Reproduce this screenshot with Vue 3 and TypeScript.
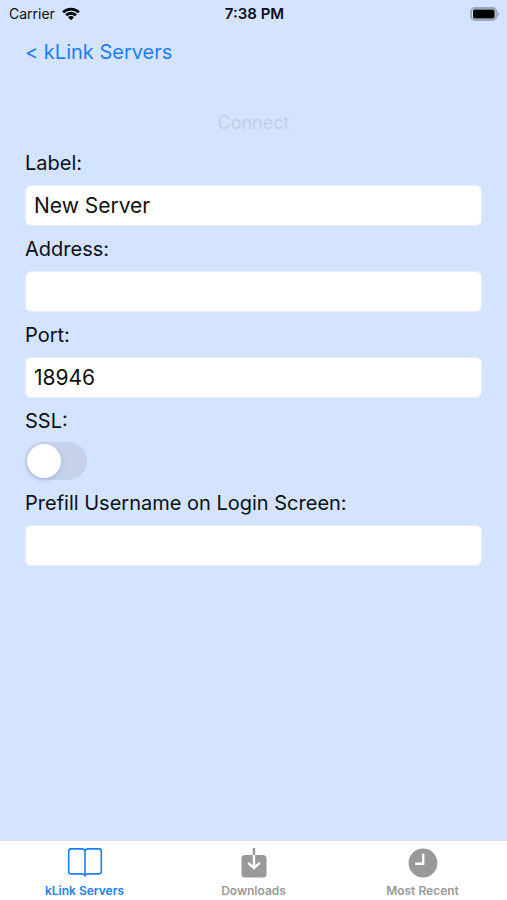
<script setup lang="ts">
import { reactive, ref, computed } from 'vue'

interface ServerForm {
  label: string
  address: string
  port: string
  ssl: boolean
  username: string
}

type TabId = 'servers' | 'downloads' | 'recent'

const form = reactive<ServerForm>({
  label: 'New Server',
  address: '',
  port: '18946',
  ssl: false,
  username: '',
})

const activeTab = ref<TabId>('servers')
const canConnect = computed<boolean>(() => form.address.trim() !== '' && form.port !== '')
</script>

<template>
  <div class="screen">
    <header class="status">
      <div class="carrier">
        <span>Carrier</span>
        <svg class="wifi" viewBox="0 0 18 14" aria-hidden="true">
          <path d="M0.2 4.4 A12.4 12.4 0 0 1 17.8 4.4 L15.9 6.3 A9.8 9.8 0 0 0 2.1 6.3Z" />
          <path d="M3.1 7.3 A8.2 8.2 0 0 1 14.9 7.3 L12.9 9.3 A5.6 5.6 0 0 0 5.1 9.3Z" />
          <path d="M6 10.3 A4.2 4.2 0 0 1 12 10.3 L9 13.3Z" />
        </svg>
      </div>
      <time class="clock">7:38 PM</time>
      <svg class="battery" viewBox="0 0 30 14" aria-hidden="true">
        <rect x="1" y="1" width="25.4" height="12" rx="4" class="shell" />
        <rect x="3" y="2.6" width="21.6" height="8.8" rx="1.6" />
        <path d="M27.6 4.4 Q30.8 7 27.6 9.6Z" class="cap" />
      </svg>
    </header>

    <nav class="top">
      <a class="back" href="#servers">&lt; kLink Servers</a>
    </nav>

    <form class="form" @submit.prevent>
      <button class="connect" type="submit" :disabled="!canConnect">Connect</button>

      <label for="label">Label:</label>
      <input id="label" v-model="form.label" class="field" type="text" />

      <label for="address">Address:</label>
      <input id="address" v-model="form.address" class="field" type="text" />

      <label for="port">Port:</label>
      <input id="port" v-model="form.port" class="field" type="text" inputmode="numeric" />

      <label for="ssl">SSL:</label>
      <input id="ssl" v-model="form.ssl" class="switch" type="checkbox" role="switch" />

      <label for="username">Prefill Username on Login Screen:</label>
      <input id="username" v-model="form.username" class="field" type="text" />
    </form>

    <nav class="tabs">
      <button class="tab" :class="{ active: activeTab === 'servers' }" type="button" @click="activeTab = 'servers'">
        <svg viewBox="0 0 36 32" aria-hidden="true">
          <path
            class="line"
            d="M18 4 Q17.4 1.9 15 1.9 H4 Q1.7 1.9 1.7 4.2 V24.6 Q1.7 26.9 4 26.9 H14.6 Q17 26.9 18 28.4 Q19 26.9 21.4 26.9 H32 Q34.3 26.9 34.3 24.6 V4.2 Q34.3 1.9 32 1.9 H21 Q18.6 1.9 18 4 V29"
          />
        </svg>
        <span>kLink Servers</span>
      </button>
      <button class="tab" :class="{ active: activeTab === 'downloads' }" type="button" @click="activeTab = 'downloads'">
        <svg viewBox="0 0 36 32" aria-hidden="true">
          <rect x="5.5" y="8" width="25" height="22.6" rx="3.6" class="fill" />
          <path d="M18 1 V8" class="stem" />
          <path d="M18 8 V20.8 M12.2 15.8 L18 21.2 L23.8 15.8" class="cut" />
        </svg>
        <span>Downloads</span>
      </button>
      <button class="tab" :class="{ active: activeTab === 'recent' }" type="button" @click="activeTab = 'recent'">
        <svg viewBox="0 0 36 32" aria-hidden="true">
          <circle cx="18" cy="16" r="14.4" class="fill" />
          <path d="M18.2 6.4 V16.8 H10.2" class="cut" />
        </svg>
        <span>Most Recent</span>
      </button>
    </nav>
  </div>
</template>

<style>
body {
  margin: 0;
  background: #d4e3ff;
}
</style>

<style scoped>
.screen {
  display: flex;
  flex-direction: column;
  min-height: 100vh;
  background: #d4e3ff;
  color: #0a0f18;
  font-family: Inter, 'Liberation Sans', sans-serif;
  font-size: 20px;
  line-height: 26px;
}

.status {
  display: grid;
  grid-template-columns: 1fr auto 1fr;
  align-items: center;
  height: 27px;
  padding: 0 7px 0 9px;
  font-size: 14px;
  line-height: 20px;
}

.carrier {
  display: flex;
  align-items: center;
  gap: 7px;
}

.wifi {
  width: 18px;
  height: 14px;
}

.clock {
  font-size: 15px;
  font-weight: 600;
}

.battery {
  justify-self: end;
  width: 30px;
  height: 14px;
}

.shell {
  fill: none;
  stroke: #9aa5bc;
  stroke-width: 1.8;
}

.cap {
  fill: #9aa5bc;
}

.top {
  padding: 12px 25px 0;
}

.back {
  color: #1b80f5;
  text-decoration: none;
}

.form {
  display: flex;
  flex: 1;
  flex-direction: column;
  align-items: flex-start;
  padding: 45px 25px 24px;
}

.connect {
  align-self: center;
  margin: 0 0 14px;
  padding: 0;
  border: 0;
  background: none;
  color: #1b80f5;
  font: inherit;
  font-size: 18px;
  line-height: 26px;
}

.connect:disabled {
  color: #bfcee9;
}

.field {
  box-sizing: border-box;
  width: 100%;
  height: 41px;
  margin: 9px 0 10px;
  padding: 0 8px;
  border: 1px solid #e8eef9;
  border-radius: 6px;
  background: #fff;
  color: #111;
  font: inherit;
  font-size: 21px;
}

.switch {
  display: flex;
  align-items: center;
  box-sizing: border-box;
  width: 62px;
  height: 38px;
  margin: 8px 0 10px;
  padding: 2px;
  border-radius: 19px;
  background: #c6d2ec;
  appearance: none;
}

.switch::before {
  content: '';
  width: 34px;
  height: 34px;
  border-radius: 50%;
  background: #fff;
  box-shadow: 0 2px 5px rgb(60 80 130 / 20%);
}

.switch:checked {
  justify-content: flex-end;
  background: #34c759;
}

.tabs {
  display: grid;
  grid-template-columns: repeat(3, 1fr);
  box-sizing: border-box;
  height: 60px;
  border-top: 1px solid #dde3ee;
  background: #fff;
}

.tab {
  display: flex;
  flex-direction: column;
  align-items: center;
  gap: 4px;
  padding: 6px 0 0;
  border: 0;
  background: none;
  color: #999;
  font: inherit;
  font-size: 12px;
  font-weight: 600;
  line-height: 16px;
}

.tab.active {
  color: #1b80f5;
}

.tab svg {
  width: 36px;
  height: 32px;
}

.line,
.stem,
.cut {
  fill: none;
  stroke: currentColor;
  stroke-width: 1.6;
  stroke-linecap: round;
  stroke-linejoin: round;
}

.fill {
  fill: currentColor;
}

.stem {
  stroke-width: 2.4;
  stroke-linecap: butt;
}

.cut {
  stroke: #fff;
  stroke-width: 2.4;
  stroke-linecap: butt;
  stroke-linejoin: miter;
}
</style>
